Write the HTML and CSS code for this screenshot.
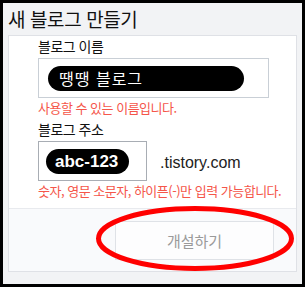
FILE: index.html
```html
<!DOCTYPE html>
<html lang="ko">
<head>
  <meta charset="UTF-8" />
  <title>새 블로그 만들기</title>
  <link rel="stylesheet" href="styles.css">
</head>
<body>
  <div class="window">
    <h1 class="title">새 블로그 만들기</h1>

    <div class="panel">
      <div class="panel-body">
        <div class="field">
          <label class="label">블로그 이름</label>
          <div class="input input-name">
            <span class="pill">땡땡 블로그</span>
          </div>
          <p class="hint">사용할 수 있는 이름입니다.</p>
        </div>

        <div class="field">
          <label class="label">블로그 주소</label>
          <div class="addr-row">
            <div class="input input-addr">
              <span class="pill pill-en">abc-123</span>
            </div>
            <span class="domain">.tistory.com</span>
          </div>
          <p class="hint">숫자, 영문 소문자, 하이픈(-)만 입력 가능합니다.</p>
        </div>
      </div>

      <div class="panel-foot">
        <button class="btn">개설하기</button>
        <svg class="mark" width="202" height="70" viewBox="0 0 202 70">
          <ellipse cx="100" cy="32.5" rx="96.5" ry="30" fill="none" stroke="#f00" stroke-width="5" />
        </svg>
      </div>
    </div>
  </div>
</body>
</html>
```

FILE: styles.css
```css
* {
  box-sizing: border-box;
}

body {
  margin: 0;
  padding: 3px;
  background-color: #000;
  font-family: "Noto Sans CJK KR", "Noto Sans", sans-serif;
  color: #111;
}

.window {
  height: 281px;
  background-color: #f2f3f5;
  display: flex;
  flex-direction: column;
}

.title {
  margin: 0;
  height: 32px;
  padding: 4px 0 0 5px;
  font-size: 19px;
  font-weight: normal;
  line-height: 24px;
  letter-spacing: -0.4px;
  color: #111;
}

.panel {
  margin: 0 5px;
  border: 1px solid #dfe1e6;
  background-color: #fff;
  display: flex;
  flex-direction: column;
}

.panel-body {
  padding: 1px 0 0 29px;
  height: 172px;
}

.field {
  display: flex;
  flex-direction: column;
}

.label {
  font-size: 14px;
  line-height: 18px;
  height: 21px;
  letter-spacing: -0.5px;
}

.input {
  border: 1px solid #c9cfd6;
  background-color: #fff;
  display: flex;
  align-items: center;
}

.input-name {
  width: 231px;
  height: 40px;
  padding-left: 9px;
}

.input-addr {
  width: 109px;
  height: 40px;
  padding-left: 7px;
  border-color: #a8adb4;
}

.pill {
  background-color: #000;
  color: #fff;
  border-radius: 13px;
  height: 25px;
  width: 196px;
  padding-left: 11px;
  font-size: 16px;
  line-height: 25px;
  letter-spacing: 1px;
}

.pill-en {
  width: 83px;
  height: 25px;
  padding-left: 9px;
  font-family: "Liberation Sans", Arial, sans-serif;
  font-weight: bold;
  font-size: 17px;
  line-height: 25px;
  letter-spacing: 0;
  border-radius: 13px;
}

.addr-row {
  display: flex;
  align-items: center;
}

.domain {
  margin-left: 13px;
  font-family: "Liberation Sans", Arial, sans-serif;
  font-size: 16px;
  color: #222;
  padding-top: 3px;
}

.hint {
  margin: 1px 0 4px;
  font-size: 13px;
  line-height: 17px;
  letter-spacing: -0.5px;
  color: #f5564a;
}

.panel-foot {
  position: relative;
  border-top: 1px solid #e8eaee;
  background-color: #f9fafc;
  height: 63px;
  display: flex;
  justify-content: flex-end;
  align-items: flex-start;
  padding: 12px 22px 0 0;
}

.btn {
  width: 159px;
  height: 39px;
  border: 1px solid #dfe2e7;
  background-color: #fdfdfe;
  font-family: inherit;
  font-size: 15px;
  color: #9a9a9a;
}

.mark {
  position: absolute;
  left: 86px;
  top: -3px;
}
```
